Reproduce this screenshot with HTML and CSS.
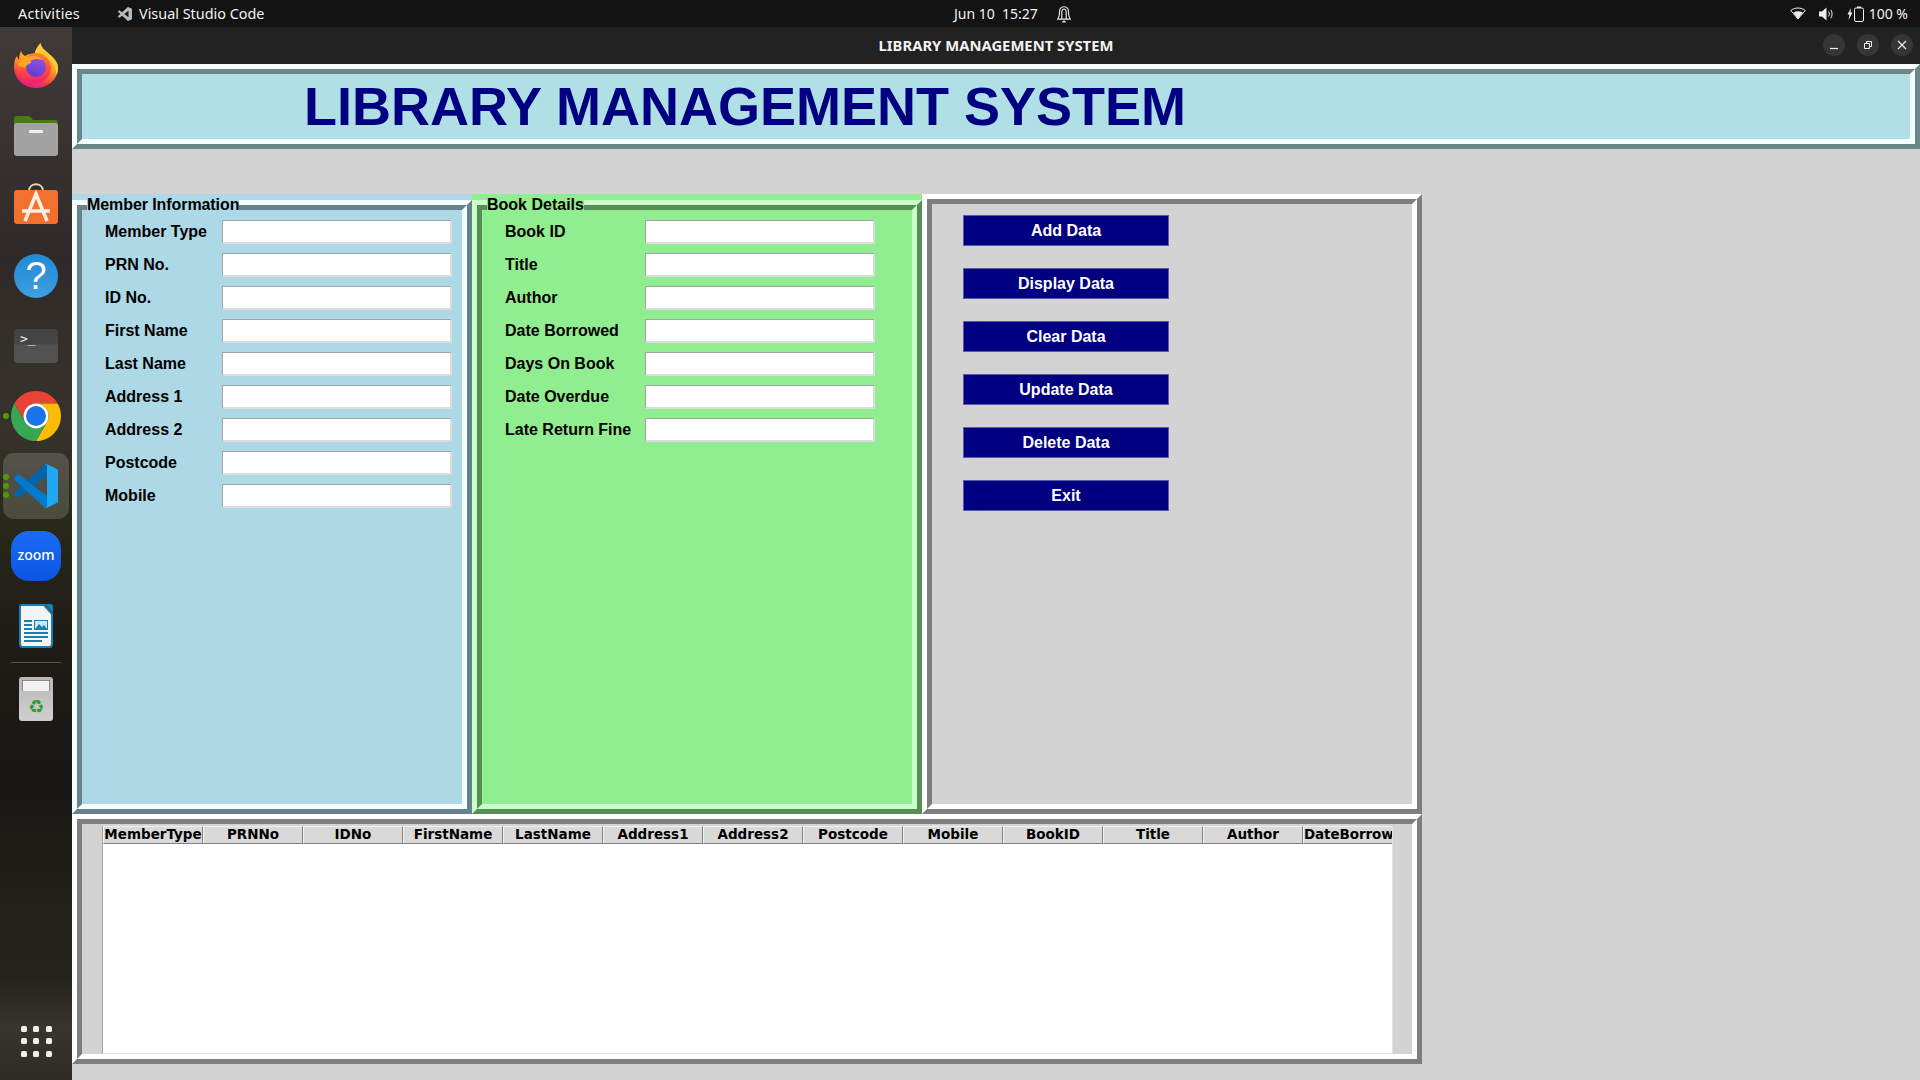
FILE: index.html
```html
<!DOCTYPE html>
<html lang="en">
<head>
    <meta charset="UTF-8">
    <meta name="viewport" content="width=device-width, initial-scale=1.0">
    <title>Library Management System</title>
    <link rel="stylesheet" href="styles.css">
</head>
<body>
    <header class="topbar">
        <span class="activities">Activities</span>
        <span class="app-name">
            <svg class="app-icon" viewBox="0 0 100 100"><path fill="#b9b9b9" d="M75.900 99.100a6.200 6.200 0 0 1-7.100-1.200L29.400 61.900 12.300 75a4.200 4.200 0 0 1-5.400-.3l-5.500-5a4.200 4.200 0 0 1 0-6.200L16.300 50 1.400 36.500a4.200 4.200 0 0 1 0-6.200l5.500-5a4.200 4.200 0 0 1 5.400-.2l17.100 13L68.800 2.100a6.200 6.200 0 0 1 7.100-1.200l20.600 9.900a6.200 6.200 0 0 1 3.500 5.600v67.200a6.200 6.200 0 0 1-3.500 5.600zM75 27.300 45.100 50 75 72.700z"/></svg>
            Visual Studio Code
        </span>
        <span class="clock">Jun 10&nbsp; 15:27</span>
        <svg class="bell" viewBox="0 0 14 16"><path fill="none" stroke="#eee" stroke-width="1" d="M1.500 12.500c1-1.500 1.500-3 1.500-6C3 3.500 4.700 1.500 7 1.500s4 2 4 5c0 3 .5 4.500 1.500 6zM5 12V7c0-2 .8-3.500 2-3.500S9 5 9 7v5"/><rect x="5.500" y="14" width="3" height="1.500" rx=".7" fill="#eee"/></svg>
        <div class="status">
            <svg class="wifi" viewBox="0 0 16 13"><path fill="none" stroke="#eee" d="M.8 3.500C4.800.2 11.200.2 15.200 3.500L8 12z"/><path fill="#eee" d="M3.200 5.500c3-1.800 6.600-1.800 9.600 0L8 12z"/></svg>
            <svg class="volume" viewBox="0 0 15 14"><path fill="#eee" d="M0 4.500h3L7.500 .5v13L3 9.500H0z"/><path fill="none" stroke="#eee" d="M9.500 4.500c1 1.500 1 3.500 0 5M11.800 2.800c1.700 2.500 1.700 6 0 8.400"/></svg>
            <svg class="battery" viewBox="0 0 17 16"><path fill="#eee" d="M4 2 .5 8.500h2L1.500 14 5.500 6.500h-2z"/><rect x="7.500" y="2" width="9" height="13.500" rx="1.500" fill="none" stroke="#eee"/><rect x="10" y=".5" width="4" height="1.500" fill="#eee"/></svg>
            <span>100 %</span>
        </div>
    </header>

    <div class="desktop">
        <nav class="dock">
            <div class="dock-item">
                <svg class="icon-fox" viewBox="0 0 44 45">
                    <defs>
                        <linearGradient id="fxBody" x1="0.700" y1="0" x2="0.350" y2="1">
                            <stop offset="0" stop-color="#ffd93a"/>
                            <stop offset="0.500" stop-color="#ff9a1f"/>
                            <stop offset="0.800" stop-color="#f8384a"/>
                            <stop offset="1" stop-color="#e2168a"/>
                        </linearGradient>
                        <linearGradient id="fxRing" x1="0.500" y1="0" x2="0.500" y2="1">
                            <stop offset="0" stop-color="#ff8a1f"/>
                            <stop offset="0.600" stop-color="#ff4a3a"/>
                            <stop offset="1" stop-color="#ee1f7a"/>
                        </linearGradient>
                        <linearGradient id="fxCore" x1="0.700" y1="0" x2="0.300" y2="1">
                            <stop offset="0" stop-color="#9a52e0"/>
                            <stop offset="1" stop-color="#5b3bd6"/>
                        </linearGradient>
                    </defs>
                    <path fill="url(#fxBody)" d="M26.600 0C27 5 31 7 35 11c6 5 9 9 9 14 0 11-10 20-22 20C10 45 0 36 0 24c0-4 1-9 3-11 .5 2 1 3 2 4 0-4 1-7 2-9 1 3 2.500 4 4 5 3-2 7-2.500 10-2 0-4 3-8 5.600-11z"/>
                    <path fill="#ffc83a" d="M26.600 0C27 5 31 7 35 11c6 5 9 9 9 14 0 3-.5 5-1.500 7C42 24 37 16 28 13c-3-1-5-1.500-7-2 0-4 3-8 5.600-11z"/>
                    <circle cx="22" cy="25" r="15" fill="url(#fxRing)"/>
                    <circle cx="22" cy="24" r="10" fill="url(#fxCore)"/>
                    <path fill="#ffa526" d="M4 22c2-6 8-9 14-9 5 0 9 2 11 4-4-1.500-8-1.500-11 0-2 1-2 2 0 2.500-3 1.500-6 2.500-7 5.500-3-1-5-2-7-3z"/>
                </svg>
            </div>
            <div class="dock-item">
                <svg class="icon" viewBox="0 0 44 40">
                    <path fill="#4a7a10" d="M3 0h11c2 0 3 1 4 2.500L19 4h22c2 0 3 1 3 3v10H0V3c0-2 1-3 3-3z"/>
                    <rect y="7" width="44" height="33" rx="3" fill="#a3a3a3"/>
                    <rect x="15" y="14" width="14" height="3" rx="1" fill="#eee"/>
                </svg>
            </div>
            <div class="dock-item">
                <svg class="icon-shop" viewBox="0 0 44 41">
                    <path fill="none" stroke="#f3d6a8" stroke-width="1.800" d="M15 8c0-9 14-9 14 0"/>
                    <rect y="7" width="44" height="34" rx="3" fill="#f4702f"/>
                    <path fill="none" stroke="#fdeee6" stroke-width="3.500" d="M11 38 22 11l11 27M8 28h28"/>
                </svg>
            </div>
            <div class="dock-item">
                <div class="help-icon">?</div>
            </div>
            <div class="dock-item">
                <div class="term-icon">&gt;_</div>
            </div>
            <div class="dock-item">
                <span class="dot"></span>
                <svg class="icon-big" viewBox="0 0 50 50">
                    <path fill="#ea4335" d="M3.350 12.500A25 25 0 0 1 46.650 12.500H25A12.500 12.500 0 0 0 14.170 31.250z"/>
                    <path fill="#fbbc04" d="M46.650 12.500A25 25 0 0 1 25 50L35.830 31.250A12.500 12.500 0 0 0 25 12.500z"/>
                    <path fill="#34a853" d="M25 50A25 25 0 0 1 3.350 12.500L14.170 31.250A12.500 12.500 0 0 0 35.830 31.250z"/>
                    <circle cx="25" cy="25" r="12.500" fill="#fff"/>
                    <circle cx="25" cy="25" r="10" fill="#1a73e8"/>
                </svg>
            </div>
            <div class="dock-item active">
                <span class="dot dot-1"></span>
                <span class="dot dot-2"></span>
                <span class="dot dot-3"></span>
                <svg class="icon" viewBox="0 0 100 100">
                    <path fill="#0065a9" d="M96.500 10.800 75.900.9a6.200 6.200 0 0 0-7.100 1.200L1.400 63.500a4.200 4.200 0 0 0 0 6.200l5.500 5a4.200 4.200 0 0 0 5.400.2L93.300 13.500c2.700-2 6.700-.1 6.700 3.300v-.2a6.200 6.200 0 0 0-3.500-5.800z"/>
                    <path fill="#007acc" d="M96.500 89.200 75.900 99.100a6.200 6.200 0 0 1-7.100-1.200L1.400 36.500a4.200 4.200 0 0 1 0-6.200l5.500-5a4.200 4.200 0 0 1 5.400-.2L93.300 86.500c2.700 2 6.700.1 6.700-3.300v.2a6.200 6.200 0 0 1-3.500 5.800z"/>
                    <path fill="#1fa8f1" d="M75.900 99.100a6.200 6.200 0 0 1-7.100-1.200c2.300 2.300 6.200.7 6.200-2.600V4.700c0-3.300-3.900-4.900-6.200-2.600a6.200 6.200 0 0 1 7.100-1.200l20.600 9.900a6.200 6.200 0 0 1 3.500 5.600v66.800a6.200 6.200 0 0 1-3.500 5.600z"/>
                </svg>
            </div>
            <div class="dock-item">
                <div class="zoom-icon">zoom</div>
            </div>
            <div class="dock-item">
                <svg class="writer" viewBox="0 0 34 44">
                    <path fill="#f4f4f4" stroke="#1a7fb0" stroke-width="2" d="M3 1h22l8 9v30c0 2-1 3-3 3H4c-2 0-3-1-3-3V3c0-1 1-2 2-2z"/>
                    <path fill="#1a7fb0" d="M26 0h6c1 0 2 1 2 2v7z"/>
                    <path fill="#1a7fb0" d="M5 16h8v2H5zM5 20h8v2H5zM5 24h8v2H5zM5 28h24v2H5zM5 32h24v2H5zM5 36h18v2H5z"/>
                    <rect x="15.500" y="16.500" width="13" height="9" fill="#cfe4ef" stroke="#1a7fb0"/>
                    <path fill="#1a7fb0" d="M16 25l4-5 3 3 2-2 3 4z"/>
                </svg>
            </div>
            <div class="dock-sep"></div>
            <div class="dock-item">
                <div class="trash-icon"><div class="trash-slot"></div><span class="recycle">♻</span></div>
            </div>
            <div class="dock-item dock-grid">
                <div class="app-grid">
                    <i></i><i></i><i></i><i></i><i></i><i></i><i></i><i></i><i></i>
                </div>
            </div>
        </nav>

        <div class="window">
            <div class="titlebar">
                <span class="title-text">LIBRARY MANAGEMENT SYSTEM</span>
                <div class="win-buttons">
                    <span class="win-btn"><svg viewBox="0 0 12 12"><path stroke="#eee" stroke-width="1.200" d="M2 9.500h8"/></svg></span>
                    <span class="win-btn"><svg viewBox="0 0 12 12"><path fill="none" stroke="#eee" d="M2.500 4.500h5v5h-5zM4.500 4V2.500h5v5H8"/></svg></span>
                    <span class="win-btn"><svg viewBox="0 0 12 12"><path stroke="#eee" stroke-width="1.200" d="M2 2l8 8M10 2l-8 8"/></svg></span>
                </div>
            </div>

            <div class="content">
                <div class="ridge powder banner">
                    <div class="ridge-inner banner-inner">
                        <h1>LIBRARY MANAGEMENT SYSTEM</h1>
                    </div>
                </div>

                <div class="panels">
                    <section class="labelframe blue member-frame">
                        <span class="legend">Member Information</span>
                        <div class="ridge">
                            <div class="ridge-inner">
                                <form class="fields member-fields">
                                    <label>Member Type</label><input type="text">
                                    <label>PRN No.</label><input type="text">
                                    <label>ID No.</label><input type="text">
                                    <label>First Name</label><input type="text">
                                    <label>Last Name</label><input type="text">
                                    <label>Address 1</label><input type="text">
                                    <label>Address 2</label><input type="text">
                                    <label>Postcode</label><input type="text">
                                    <label>Mobile</label><input type="text">
                                </form>
                            </div>
                        </div>
                    </section>

                    <section class="labelframe green book-frame">
                        <span class="legend">Book Details</span>
                        <div class="ridge">
                            <div class="ridge-inner">
                                <form class="fields book-fields">
                                    <label>Book ID</label><input type="text">
                                    <label>Title</label><input type="text">
                                    <label>Author</label><input type="text">
                                    <label>Date Borrowed</label><input type="text">
                                    <label>Days On Book</label><input type="text">
                                    <label>Date Overdue</label><input type="text">
                                    <label>Late Return Fine</label><input type="text">
                                </form>
                            </div>
                        </div>
                    </section>

                    <section class="ridge gray button-frame">
                        <div class="ridge-inner button-list">
                            <button type="button">Add Data</button>
                            <button type="button">Display Data</button>
                            <button type="button">Clear Data</button>
                            <button type="button">Update Data</button>
                            <button type="button">Delete Data</button>
                            <button type="button">Exit</button>
                        </div>
                    </section>
                </div>

                <section class="ridge gray table-frame">
                    <div class="ridge-inner table-inner">
                        <div class="tree">
                            <div class="tree-head">
                                <span>MemberType</span>
                                <span>PRNNo</span>
                                <span>IDNo</span>
                                <span>FirstName</span>
                                <span>LastName</span>
                                <span>Address1</span>
                                <span>Address2</span>
                                <span>Postcode</span>
                                <span>Mobile</span>
                                <span>BookID</span>
                                <span>Title</span>
                                <span>Author</span>
                                <span class="cut-col">DateBorrow</span>
                            </div>
                        </div>
                    </div>
                </section>
            </div>
        </div>
    </div>
</body>
</html>
```

FILE: styles.css
```css
* {
    box-sizing: border-box;
}
html, body {
    margin: 0;
    height: 100%;
    overflow: hidden;
}
body {
    display: flex;
    flex-direction: column;
    font-family: "Liberation Sans", Arial, sans-serif;
    background-color: #d3d3d3;
}

/* gnome top bar */
.topbar {
    height: 27px;
    flex: none;
    display: flex;
    align-items: center;
    padding-left: 18px;
    background-color: #131313;
    color: #f2f2f2;
    font-family: "Noto Sans", sans-serif;
    font-size: 14.400px;
}
.activities {
    width: 100px;
    letter-spacing: 0.200px;
}
.app-name {
    display: flex;
    align-items: center;
    gap: 7px;
    width: 836px;
}
.app-icon {
    width: 14px;
    height: 14px;
}
.clock {
    width: 102px;
    font-size: 14px;
    white-space: nowrap;
}
.bell {
    width: 16px;
    height: 18px;
}
.status {
    margin-left: auto;
    padding-right: 12px;
    display: flex;
    align-items: center;
    font-size: 14px;
}
.wifi {
    width: 16px;
    height: 13px;
    margin-right: 13px;
}
.volume {
    width: 15px;
    height: 14px;
    margin-right: 13px;
}
.battery {
    width: 17px;
    height: 16px;
    margin-right: 5px;
}

.desktop {
    flex: 1;
    display: flex;
    min-height: 0;
}

/* dock */
.dock {
    width: 72px;
    flex: none;
    display: flex;
    flex-direction: column;
    padding: 4px 0 4px;
    background: linear-gradient(180deg, #403b38 0%, #2f2a27 22%, #37332c 38%, #2a2a1a 46%, #1f1c17 58%, #191714 72%, #22211a 84%, #24221d 90%, #38342f 95%, #2f2c28 100%);
}
.dock-item {
    position: relative;
    height: 70px;
    flex: none;
    display: flex;
    align-items: center;
    justify-content: center;
}
.dock-item.active::before {
    content: "";
    position: absolute;
    left: 3px;
    top: 2px;
    width: 66px;
    height: 66px;
    border-radius: 11px;
    background-color: rgba(255, 255, 255, 0.16);
}
.dock-item svg {
    position: relative;
}
.icon {
    width: 44px;
    height: 44px;
}
.icon-fox {
    width: 44px;
    height: 45px;
    margin-bottom: 2px;
}
.icon-shop {
    width: 44px;
    height: 41px;
    margin-bottom: 5px;
}
.icon-big {
    width: 50px;
    height: 50px;
}
.writer {
    width: 34px;
    height: 44px;
}
.dot {
    position: absolute;
    left: 3px;
    top: 32px;
    width: 6px;
    height: 6px;
    border-radius: 50%;
    background-color: #4e9a06;
    z-index: 1;
}
.dot-1 {
    top: 23px;
}
.dot-2 {
    top: 32px;
}
.dot-3 {
    top: 41px;
}
.help-icon {
    width: 44px;
    height: 44px;
    border-radius: 50%;
    background: linear-gradient(180deg, #2488d4, #3d9fe0);
    color: #fff;
    font-size: 38px;
    line-height: 44px;
    text-align: center;
}
.term-icon {
    width: 44px;
    height: 34px;
    border-radius: 4px;
    background: linear-gradient(180deg, #444 0%, #444 45%, #525252 46%, #525252 100%);
    color: #eee;
    font-family: "DejaVu Sans Mono", monospace;
    font-size: 13px;
    line-height: 16px;
    padding: 2px 0 0 6px;
}
.zoom-icon {
    width: 50px;
    height: 50px;
    border-radius: 18px;
    background: linear-gradient(180deg, #1a6cf5, #0b55e0);
    color: #fff;
    font-family: "Noto Sans", sans-serif;
    font-size: 14px;
    font-weight: 500;
    line-height: 48px;
    text-align: center;
}
.dock-sep {
    height: 1px;
    margin: 1px 11px;
    flex: none;
    background-color: #55514d;
}
.trash-icon {
    width: 34px;
    height: 44px;
    border-radius: 3px;
    background: linear-gradient(180deg, #b8b8b8, #cfcfcf);
    text-align: center;
    overflow: hidden;
}
.trash-slot {
    height: 11px;
    margin: 3px 3px 0;
    background-color: #f2f2f2;
    border: 1px solid #8c8c8c;
    border-bottom: none;
}
.recycle {
    display: block;
    margin-top: 6px;
    color: #2f9a2f;
    font-family: "DejaVu Sans", sans-serif;
    font-size: 18px;
    line-height: 20px;
}
.dock-grid {
    margin-top: auto;
}
.app-grid {
    display: grid;
    grid-template-columns: repeat(3, 6px);
    gap: 6.500px;
}
.app-grid i {
    height: 6px;
    border-radius: 1.500px;
    background-color: #eeeeea;
}

/* window */
.window {
    flex: 1;
    display: flex;
    flex-direction: column;
    min-width: 0;
}
.titlebar {
    height: 37px;
    flex: none;
    position: relative;
    display: flex;
    align-items: center;
    justify-content: center;
    padding-bottom: 2px;
    background-color: #222222;
    color: #f2f2f2;
    font-family: "Noto Sans", sans-serif;
    font-size: 14.800px;
    font-weight: 700;
}
.win-buttons {
    position: absolute;
    right: 7px;
    top: 7px;
    display: flex;
    gap: 12px;
}
.win-btn {
    width: 22px;
    height: 22px;
    display: flex;
    align-items: center;
    justify-content: center;
    border-radius: 50%;
    background-color: #363636;
}
.win-btn svg {
    width: 12px;
    height: 12px;
}
.content {
    flex: 1;
    background-color: #d3d3d3;
}

/* tk style ridge: two nested 5px borders */
.powder {
    --bg: #b0e0e6;
    --dark: #6a868a;
    --light: #f6ffff;
}
.blue {
    --bg: #add8e6;
    --dark: #68818a;
    --light: #f2ffff;
}
.green {
    --bg: #90ee90;
    --dark: #568e56;
    --light: #c9ffc9;
}
.gray {
    --bg: #d3d3d3;
    --dark: #7e7e7e;
    --light: #ffffff;
}
.ridge {
    border: 5px solid;
    border-color: var(--light) var(--dark) var(--dark) var(--light);
}
.ridge-inner {
    height: 100%;
    border: 5px solid;
    border-color: var(--dark) var(--light) var(--light) var(--dark);
    background-color: var(--bg);
}

.banner {
    height: 85px;
}
.banner-inner {
    padding-left: 222px;
}
h1 {
    margin: 0;
    color: #000080;
    font-size: 54px;
    font-weight: 700;
    line-height: 65px;
}

.panels {
    display: flex;
    margin-top: 45px;
    height: 620px;
}
.labelframe {
    position: relative;
    padding-top: 6px;
    background-color: var(--bg);
}
.labelframe .ridge {
    height: 100%;
}
.legend {
    position: absolute;
    left: 15px;
    top: 2px;
    background-color: var(--bg);
    color: #000;
    font-size: 16px;
    font-weight: 700;
    line-height: 18px;
}
.member-frame {
    width: 400px;
}
.member-frame .legend {
    letter-spacing: -0.080px;
}
.book-frame {
    width: 450px;
}
.button-frame {
    width: 500px;
}
.fields {
    display: grid;
    row-gap: 9px;
    padding: 10px 0 0 23px;
    align-items: center;
    font-size: 16px;
    font-weight: 700;
}
.member-fields {
    grid-template-columns: 117px 230px;
}
.book-fields {
    grid-template-columns: 140px 230px;
}
.fields label {
    color: #000;
}
.fields input {
    height: 24px;
    width: 230px;
    padding: 0;
    background-color: #fff;
    border-style: solid;
    border-width: 1px 2px 2px 1px;
    border-color: #a3a3a3 #dcdcdc #dcdcdc #a3a3a3;
    outline: none;
}

.button-list {
    display: flex;
    flex-direction: column;
    align-items: flex-start;
    gap: 22px;
    padding: 11px 0 0 31px;
}
button {
    width: 206px;
    height: 31px;
    padding: 0;
    background-color: #000080;
    border: 1px solid #5a5aa8;
    color: #fff;
    font-family: "Liberation Sans", Arial, sans-serif;
    font-size: 16px;
    font-weight: 700;
}

.table-frame {
    width: 1350px;
    height: 250px;
}
.table-inner {
    display: flex;
    padding: 2px 0 0 20px;
}
.tree {
    width: 1291px;
    height: 100%;
    overflow: hidden;
    background-color: #fff;
    border-left: 1px solid #a3a3a3;
    border-right: 1px solid #e2e2e2;
    border-bottom: 1px solid #e2e2e2;
}
.tree-head {
    display: grid;
    grid-template-columns: repeat(13, 100px);
    height: 18px;
}
.tree-head span {
    overflow: hidden;
    white-space: nowrap;
    text-align: center;
    background-color: #d9d9d9;
    border: 1px solid;
    border-color: #f2f2f2 #808080 #808080 #f2f2f2;
    color: #000;
    font-family: "DejaVu Sans", sans-serif;
    font-size: 13.500px;
    font-weight: 700;
    line-height: 15px;
}
.tree-head .cut-col {
    text-align: left;
    letter-spacing: -0.100px;
}
```
